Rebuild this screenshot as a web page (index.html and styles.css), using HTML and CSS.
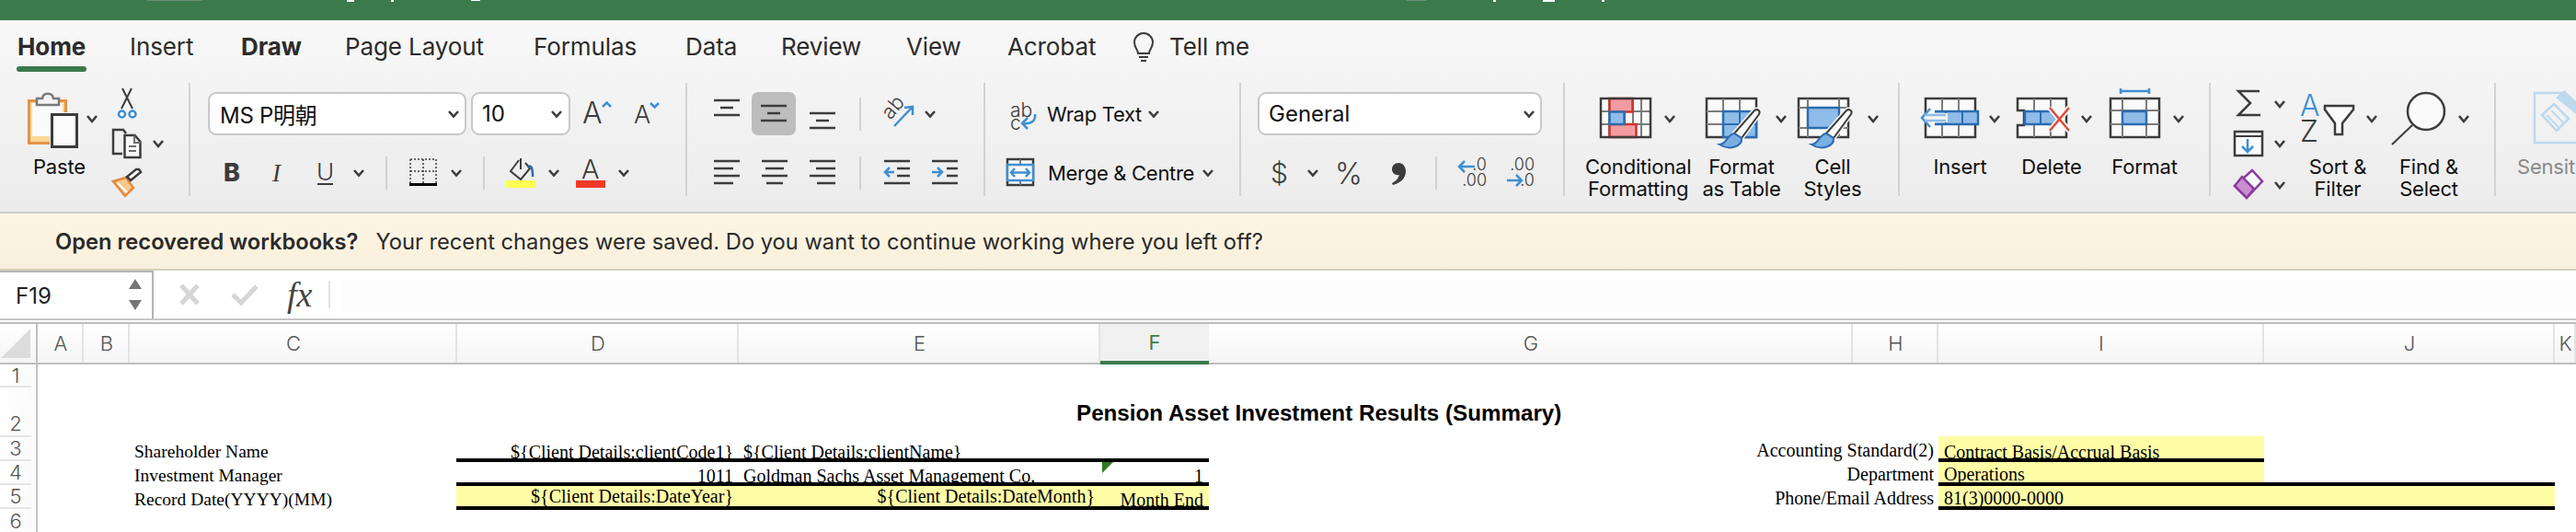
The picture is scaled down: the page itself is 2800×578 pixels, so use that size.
FILE: index.html
```html
<!DOCTYPE html>
<html lang="en">
<head>
<meta charset="utf-8">
<title>Excel</title>
<link rel="stylesheet" href="styles.css">
</head>
<body>
<div class="titlebar">
  <svg width="2800" height="22" viewBox="0 0 2800 22"><rect class="sp-d" x="160" y="0" width="60" height="1"/><rect class="sp-w" x="377" y="0" width="8" height="2"/><rect class="sp-w" x="425" y="0" width="3" height="2"/><rect class="sp-w" x="512" y="0" width="10" height="1"/><rect class="sp-d" x="1529" y="0" width="22" height="1"/><rect class="sp-w" x="1623" y="0" width="3" height="2"/><rect class="sp-w" x="1677" y="0" width="13" height="2"/><rect class="sp-w" x="1741" y="0" width="3" height="2"/></svg>
</div>

<nav class="tabs">
  <a class="tab tab-home">Home</a>
  <a class="tab tab-insert">Insert</a>
  <a class="tab tab-draw">Draw</a>
  <a class="tab tab-layout">Page Layout</a>
  <a class="tab tab-formulas">Formulas</a>
  <a class="tab tab-data">Data</a>
  <a class="tab tab-review">Review</a>
  <a class="tab tab-view">View</a>
  <a class="tab tab-acrobat">Acrobat</a>
  <svg class="bulb" width="26" height="34" viewBox="1228 34 26 34"><path class="s2" d="M1235 58c0-4-4-6-4-12a10 10 0 0 1 20 0c0 6-4 8-4 12z"/><path class="s2" d="M1236 62h10M1238 66h6"/></svg>
  <a class="tab tab-tell">Tell me</a>
</nav>

<section class="ribbon">
  <!-- Clipboard -->
  <div class="group g-clip">
    <div class="big big-paste">
      <svg width="88" height="79" viewBox="20 90 88 79">
        <rect x="31.5" y="109.5" width="40" height="46" fill="#fbd994" stroke="#e39246" stroke-width="3"/>
        <rect x="35" y="112" width="33" height="36" fill="#fafafa"/>
        <path d="M40 114v-7h6c1-7 11-7 12 0h6v7z" fill="#f4f4f4" stroke="#7a7a7a" stroke-width="2.5"/>
        <rect x="54" y="122" width="33" height="40" fill="#f2f2f2"/>
        <rect x="56.500" y="124.500" width="27" height="35" fill="#fbfbfb" stroke="#3c3c3c" stroke-width="3"/>
        <polyline class="cv" points="95,126 100,132 105,126"/>
      </svg>
      <span class="blabel">Paste</span>
    </div>
    <div class="clip-col">
      <svg width="64" height="42" viewBox="120 92 64 42">
        <path class="s2" d="M133 96l11 22M143 96l-11 22"/>
        <circle cx="132.500" cy="124" r="3.500" fill="#fff" stroke="#3f8fd2" stroke-width="2.500"/>
        <circle cx="144" cy="124" r="3.500" fill="#fff" stroke="#3f8fd2" stroke-width="2.500"/>
      </svg>
      <svg width="64" height="42" viewBox="120 134 64 42">
        <path class="s25" d="M133 167h-10v-26h11l3 4"/>
        <path d="M135.500 147h11l6 7v17h-17z" fill="#f8f8f8" stroke="#3c3c3c" stroke-width="2.500"/>
        <path d="M146 147v8h7M140 159h8M140 164h8" fill="none" stroke="#6e6e6e" stroke-width="2"/>
        <polyline class="cv" points="167,153 172,159 177,153"/>
      </svg>
      <svg width="64" height="38" viewBox="120 180 64 38">
        <path d="M123 197l14-4 8 11-9 9z" fill="#f8c98a" stroke="#e2873e" stroke-width="2.500"/>
        <path d="M128 199l10 10" stroke="#fff" stroke-width="2"/>
        <path d="M138 192l4 4 11-9-2-3-3 0z" fill="#fff" stroke="#3c3c3c" stroke-width="2.500"/>
      </svg>
    </div>
  </div>

  <!-- Font -->
  <div class="group g-font">
    <div class="row1 cols-font1">
      <div class="select sel-font"><span>MS P明朝</span><svg class="chev" viewBox="0 0 12 8"><polyline points="1,1 6,6.5 11,1"/></svg></div>
      <div class="select sel-size"><span>10</span><svg class="chev" viewBox="0 0 12 8"><polyline points="1,1 6,6.5 11,1"/></svg></div>
      <svg width="90" height="47" viewBox="630 100 90 47">
        <text class="glyph" x="633" y="134" font-size="32">A</text>
        <polyline class="bl" points="655,116 659.500,111.500 664,116"/>
        <text class="glyph" x="689" y="134" font-size="27">A</text>
        <polyline class="bl" points="707,112 711.500,116.500 716,112"/>
      </svg>
    </div>
    <div class="row2 cols-font2">
      <svg width="20" height="36" viewBox="244 170 20 36"><text class="ui-b" x="243" y="197" font-size="27">B</text></svg>
      <svg width="20" height="36" viewBox="295 170 20 36"><text class="ui-i" x="296" y="197" font-size="27">I</text></svg>
      <svg width="20" height="36" viewBox="345 170 20 36"><text class="glyph" x="344" y="196" font-size="26">U</text><path class="s2" d="M345 200h17"/></svg>
      <svg class="chev" viewBox="0 0 12 8"><polyline points="1,1 6,6.5 11,1"/></svg>
      <i class="vsep"></i>
      <svg width="34" height="36" viewBox="443 170 34 36">
        <path d="M445 173h28v27M445 173v27M459 173v27M445 186h28" fill="none" stroke="#3c3c3c" stroke-width="1.500" stroke-dasharray="2 2"/>
        <path d="M444 200.500h30" stroke="#000" stroke-width="3"/>
      </svg>
      <svg class="chev" viewBox="0 0 12 8"><polyline points="1,1 6,6.5 11,1"/></svg>
      <i class="vsep"></i>
      <svg width="34" height="36" viewBox="550 170 34 36">
        <path d="M564 174l-9 12 11 9 10-12-5-6M566 172v12" fill="none" stroke="#3c3c3c" stroke-width="2"/>
        <path d="M574 181c4-2 5 2 5 11" fill="none" stroke="#2b6cb0" stroke-width="2.500"/>
        <rect x="550" y="196" width="32" height="8" fill="#fffd54"/>
      </svg>
      <svg class="chev" viewBox="0 0 12 8"><polyline points="1,1 6,6.500 11,1"/></svg>
      <svg width="34" height="36" viewBox="626 170 34 36">
        <text class="glyph" x="632" y="194" font-size="29">A</text>
        <rect x="626" y="196" width="32" height="8" fill="#f03a26"/>
      </svg>
      <svg class="chev" viewBox="0 0 12 8"><polyline points="1,1 6,6.500 11,1"/></svg>
    </div>
  </div>

  <!-- Alignment -->
  <div class="group g-align">
    <div class="row1 cols-al1">
      <svg width="30" height="47" viewBox="775 100 30 47"><path class="s25" d="M776 109h28M783 117h14M776 125h28"/></svg>
      <div class="pressed"><svg width="48" height="47" viewBox="818 100 48 47"><path class="s25" d="M828 115h28M835 123h14M828 131h28"/></svg></div>
      <svg width="30" height="47" viewBox="879 100 30 47"><path class="s25" d="M880 123h28M887 131h14M880 139h28"/></svg>
      <i class="vsep"></i>
      <svg width="40" height="47" viewBox="957 100 40 47">
        <text class="glyph" x="0" y="0" font-size="22" transform="translate(967 131) rotate(-50)">ab</text>
        <path class="bs" d="M971 137l20-21M982 117l9-1 0 9"/>
      </svg>
      <svg class="chev" viewBox="0 0 12 8"><polyline points="1,1 6,6.500 11,1"/></svg>
    </div>
    <div class="row2 cols-al2">
      <svg width="30" height="36" viewBox="775 170 30 36"><path class="s25" d="M776 175h28M776 183h21M776 191h28M776 199h21"/></svg>
      <svg width="30" height="36" viewBox="827 170 30 36"><path class="s25" d="M828 175h28M832 183h20M828 191h28M833 199h18"/></svg>
      <svg width="30" height="36" viewBox="879 170 30 36"><path class="s25" d="M880 175h28M887 183h21M880 191h28M888 199h20"/></svg>
      <i class="vsep"></i>
      <svg width="30" height="36" viewBox="961 170 30 36"><path class="s25" d="M962 175h28M976 183h14M976 191h14M962 199h28"/><path class="bs" d="M973 187h-10M968 182l-5 5 5 5"/></svg>
      <svg width="30" height="36" viewBox="1013 170 30 36"><path class="s25" d="M1014 175h28M1030 183h12M1030 191h12M1014 199h28"/><path class="bs" d="M1014 187h11M1020 182l5 5-5 5"/></svg>
    </div>
  </div>

  <!-- Wrap / merge -->
  <div class="group g-wrap">
    <div class="row1 cols-wr1">
      <svg width="34" height="47" viewBox="1096 100 34 47">
        <text class="glyph" x="1098" y="127" font-size="21">ab</text>
        <text class="glyph" x="1098" y="141" font-size="21">c</text>
        <path class="bs" d="M1125 124c1 8-5 11-13 10M1117 128l-6 6 6 6"/>
      </svg>
      <span class="rtext">Wrap Text</span>
      <svg class="chev" viewBox="0 0 12 8"><polyline points="1,1 6,6.500 11,1"/></svg>
    </div>
    <div class="row2 cols-wr2">
      <svg width="32" height="36" viewBox="1093 170 32 36">
        <rect x="1095" y="173" width="28" height="28" fill="#fafafa" stroke="#3c3c3c" stroke-width="2.500"/>
        <path d="M1109 173v28" stroke="#7a7a7a" stroke-width="2"/>
        <rect x="1095" y="179" width="28" height="17" fill="#f8f8f8" stroke="#3f8fd2" stroke-width="2.500"/>
        <path class="bs" d="M1099 187.500h20M1103 183l-4 4.500 4 4.500M1115 183l4 4.500-4 4.500"/>
      </svg>
      <span class="rtext">Merge &amp; Centre</span>
      <svg class="chev" viewBox="0 0 12 8"><polyline points="1,1 6,6.500 11,1"/></svg>
    </div>
  </div>

  <!-- Number -->
  <div class="group g-num">
    <div class="row1 cols-num1">
      <div class="select sel-gen"><span>General</span><svg class="chev" viewBox="0 0 12 8"><polyline points="1,1 6,6.500 11,1"/></svg></div>
    </div>
    <div class="row2 cols-num2">
      <svg width="20" height="36" viewBox="1381 170 20 36"><text class="glyph" x="1381" y="199" font-size="30">$</text></svg>
      <svg class="chev" viewBox="0 0 12 8"><polyline points="1,1 6,6.500 11,1"/></svg>
      <svg width="34" height="36" viewBox="1450 170 34 36"><text class="glyph" x="1451" y="200" font-size="32">%</text></svg>
      <svg width="22" height="36" viewBox="1510 170 22 36"><path d="M1520 177c5 0 8 4 8 9 0 8-6 13-14 15l-1-2c4-2 7-5 8-9-4 1-8-2-8-6 0-4 3-7 7-7z" fill="#3c3c3c"/></svg>
      <i class="vsep"></i>
      <svg width="36" height="36" viewBox="1583 170 36 36">
        <text class="tiny" x="1616" y="185" font-size="18" text-anchor="end">.0</text>
        <text class="tiny" x="1616" y="202" font-size="18" text-anchor="end">.00</text>
        <path class="bs" d="M1603 181h-17M1592 175l-6 6 6 6"/>
      </svg>
      <svg width="36" height="36" viewBox="1636 170 36 36">
        <text class="tiny" x="1668" y="185" font-size="18" text-anchor="end">.00</text>
        <text class="tiny" x="1668" y="202" font-size="18" text-anchor="end">.0</text>
        <path class="bs" d="M1638 196h16M1648 190l6 6-6 6"/>
      </svg>
    </div>
  </div>

  <!-- Styles -->
  <div class="group g-styles">
    <div class="bigs cols-styles">
      <div class="big">
        <svg width="115" height="79" viewBox="1723 90 115 79">
          <rect x="1740" y="107" width="54" height="42" fill="#fafafa"/>
          <path d="M1740 121h54M1740 135h54M1749 107v42M1766 107v42M1775 107v42M1784 107v42" class="grid"/>
          <rect x="1749.500" y="107" width="25" height="14.500" fill="#f29ca2" stroke="#c9352b" stroke-width="2.500"/>
          <rect x="1749.500" y="135" width="29" height="14" fill="#f29ca2" stroke="#c9352b" stroke-width="2.500"/>
          <rect x="1749.500" y="121.500" width="16" height="13.500" fill="#8fbce8" stroke="#2b6cb0" stroke-width="2.500"/>
          <rect x="1740" y="107" width="54" height="42" fill="none" stroke="#3c3c3c" stroke-width="2.500"/>
          <polyline class="cv" points="1810,126 1815,132 1820,126"/>
        </svg>
        <span class="blabel">Conditional<br>Formatting</span>
      </div>
      <div class="big">
        <svg width="100" height="79" viewBox="1843 90 100 79">
          <rect x="1855" y="107" width="54" height="42" fill="#fafafa" stroke="#3c3c3c" stroke-width="2.500"/>
          <path d="M1873 107v42M1891 107v42M1855 121h54M1855 135h54" class="grid"/>
          <rect x="1873" y="121" width="36" height="28" fill="#8fbce8" stroke="#2b6cb0" stroke-width="2.500"/>
          <path d="M1891 121v28M1873 135h36" stroke="#2b6cb0" stroke-width="2"/>
          <path d="M1907 120c3-2 7 0 5 4l-19 26-8-5z" fill="#fafafa" stroke="#f2f2f2" stroke-width="5"/>
          <path d="M1907 120c3-2 7 0 5 4l-19 26-8-5z" fill="#fafafa" stroke="#3c3c3c" stroke-width="2"/>
          <path d="M1869 157c8 0 8-11 16-12l8 5c1 9-13 14-24 7z" fill="#79aee3" stroke="#2b6cb0" stroke-width="2"/>
          <polyline class="cv" points="1931,126 1936,132 1941,126"/>
        </svg>
        <span class="blabel">Format<br>as Table</span>
      </div>
      <div class="big">
        <svg width="100" height="79" viewBox="1942 90 100 79">
          <rect x="1955" y="107" width="54" height="42" fill="#fafafa" stroke="#3c3c3c" stroke-width="2.500"/>
          <path d="M1965 107v42M1999 107v42M1955 117h54M1955 139h54" class="grid"/>
          <rect x="1965" y="117" width="34" height="22" fill="#8fbce8" stroke="#2b6cb0" stroke-width="2.500"/>
          <path d="M2007 120c3-2 7 0 5 4l-19 26-8-5z" fill="#fafafa" stroke="#f2f2f2" stroke-width="5"/>
          <path d="M2007 120c3-2 7 0 5 4l-19 26-8-5z" fill="#fafafa" stroke="#3c3c3c" stroke-width="2"/>
          <path d="M1969 157c8 0 8-11 16-12l8 5c1 9-13 14-24 7z" fill="#79aee3" stroke="#2b6cb0" stroke-width="2"/>
          <polyline class="cv" points="2031,126 2036,132 2041,126"/>
        </svg>
        <span class="blabel">Cell<br>Styles</span>
      </div>
    </div>
  </div>

  <!-- Cells -->
  <div class="group g-cells">
    <div class="bigs cols-cells">
      <div class="big">
        <svg width="89" height="79" viewBox="2086 90 89 79">
          <rect x="2093" y="107" width="54" height="42" fill="#fafafa" stroke="#3c3c3c" stroke-width="2.500"/>
          <path d="M2111 107v42M2129 107v42" class="grid"/>
          <rect x="2100" y="121" width="50" height="14" fill="#8fbce8" stroke="#2b6cb0" stroke-width="2.500"/>
          <path d="M2115 121v14M2133 121v14" stroke="#2b6cb0" stroke-width="2"/>
          <path d="M2103 114l-14 14 14 14v-9h14v-10h-14z" fill="#f5f5f5"/>
          <path class="bs" d="M2098 118l-9 10 9 10"/>
          <path d="M2092 125h23M2092 131h23" stroke="#8fbce8" stroke-width="2.500"/>
          <polyline class="cv" points="2163,126 2168,132 2173,126"/>
        </svg>
        <span class="blabel">Insert</span>
      </div>
      <div class="big">
        <svg width="88" height="79" viewBox="2186 90 88 79">
          <path d="M2193 120v-13h53v42h-53v-13h7v-16z" fill="#fafafa" stroke="#3c3c3c" stroke-width="2.500"/>
          <path d="M2211 107v42M2229 107v42" class="grid"/>
          <path d="M2201 121h30l8 7-8 7h-30z" fill="#8fbce8" stroke="#2b6cb0" stroke-width="2.500"/>
          <path d="M2218 121v14" stroke="#2b6cb0" stroke-width="2"/>
          <path d="M2228 117l21 25M2249 117l-21 25" stroke="#f5f5f5" stroke-width="6"/>
          <path d="M2228 117l21 25M2249 117l-21 25" stroke="#e0493c" stroke-width="2.500"/>
          <polyline class="cv" points="2263,126 2268,132 2273,126"/>
        </svg>
        <span class="blabel">Delete</span>
      </div>
      <div class="big">
        <svg width="86" height="79" viewBox="2288 90 86 79">
          <rect x="2294" y="107" width="53" height="42" fill="#fafafa" stroke="#3c3c3c" stroke-width="2.500"/>
          <path d="M2307 107v42M2333 107v42M2294 120h53M2294 135h53" class="grid"/>
          <rect x="2307" y="121" width="26" height="14" fill="#8fbce8" stroke="#2b6cb0" stroke-width="2.500"/>
          <path class="bs" d="M2305 99h31M2305 96v6M2336 96v6"/>
          <polyline class="cv" points="2363,126 2368,132 2373,126"/>
        </svg>
        <span class="blabel">Format</span>
      </div>
    </div>
  </div>

  <!-- Editing -->
  <div class="group g-edit">
    <div class="bigs cols-edit">
      <div class="edit-col">
        <svg width="64" height="42" viewBox="2426 92 64 42">
          <path class="s25" d="M2456 99h-23l13 13-13 13h24"/>
          <polyline class="cv" points="2473,110 2478,116 2483,110"/>
        </svg>
        <svg width="64" height="42" viewBox="2426 134 64 42">
          <rect x="2429" y="143" width="30" height="26" fill="#fafafa" stroke="#3c3c3c" stroke-width="2.500"/>
          <path class="s2" d="M2429 148h30"/>
          <path class="bs" d="M2443 151v14M2437 159l6 6 6-6"/>
          <polyline class="cv" points="2473,153 2478,159 2483,153"/>
        </svg>
        <svg width="64" height="42" viewBox="2426 176 64 42">
          <path d="M2429 202l19-17 11 12-17 18z" fill="#fafafa" stroke="#8a3a9e" stroke-width="2.500"/>
          <path d="M2429 202l8-10 13 13-8 10z" fill="#c78fd0" stroke="#8a3a9e" stroke-width="2.500"/>
          <polyline class="cv" points="2473,198 2478,204 2483,198"/>
        </svg>
      </div>
      <div class="big">
        <svg width="86" height="79" viewBox="2498 90 86 79">
          <text class="glyph blue" x="2500" y="126" font-size="32">A</text>
          <text class="glyph" x="2500" y="154" font-size="32">Z</text>
          <path d="M2527 115h31v4l-12 15v12h-8v-12l-11-15z" fill="#fafafa" stroke="#3c3c3c" stroke-width="2.500"/>
          <polyline class="cv" points="2573,126 2578,132 2583,126"/>
        </svg>
        <span class="blabel">Sort &amp;<br>Filter</span>
      </div>
      <div class="big">
        <svg width="88" height="79" viewBox="2596 90 88 79">
          <circle cx="2637" cy="121" r="20" fill="#fafafa" stroke="#3c3c3c" stroke-width="2.500"/>
          <path class="s2" d="M2622 136l-22 21"/>
          <polyline class="cv" points="2673,126 2678,132 2683,126"/>
        </svg>
        <span class="blabel">Find &amp;<br>Select</span>
      </div>
    </div>
  </div>

  <!-- Sensitivity -->
  <div class="group g-sens">
    <div class="big big-sens">
      <svg width="87" height="79" viewBox="2713 90 87 79">
        <path d="M2786 101h-31v54h45" fill="none" stroke="#bcd9ee" stroke-width="2.500"/>
        <path d="M2763 125l13-12 16 16-13 13z" fill="none" stroke="#bcd9ee" stroke-width="2.500"/>
        <path d="M2768 125l13 13M2773 120l13 13" stroke="#bcd9ee" stroke-width="2"/>
        <path d="M2778 106l9-8 13 12v14z" fill="#bcd9ee"/>
      </svg>
      <span class="blabel sens">Sensitivity</span>
    </div>
  </div>
</section>

<div class="banner">
  <strong>Open recovered workbooks?</strong>
  <span>Your recent changes were saved. Do you want to continue working where you left off?</span>
</div>

<div class="formula">
  <div class="namebox">
    <span>F19</span>
    <svg width="16" height="36" viewBox="0 0 16 36"><path d="M8 0l7 11H1zM1 23h14l-7 11z" fill="#757575"/></svg>
  </div>
  <div class="fx-tools">
    <svg width="24" height="24" viewBox="0 0 24 24"><path d="M3 2l18 20M21 2L3 22" stroke="#d6d6d6" stroke-width="5"/></svg>
    <svg width="30" height="24" viewBox="0 0 30 24"><path d="M2 12l9 9L28 3" fill="none" stroke="#d6d6d6" stroke-width="5"/></svg>
    <span class="fx">fx</span>
    <i class="fx-sep"></i>
  </div>
  <div class="fx-input"></div>
</div>

<div class="colheads">
  <div class="ch corner"><svg width="32" height="32" viewBox="0 0 32 32"><path d="M32 0v32H0z" fill="#dcdcdc"/></svg></div>
  <div class="ch">A</div><div class="ch">B</div><div class="ch">C</div><div class="ch">D</div><div class="ch">E</div>
  <div class="ch ch-on">F</div>
  <div class="ch">G</div><div class="ch">H</div><div class="ch">I</div><div class="ch">J</div><div class="ch">K</div>
</div>

<div class="sheet">
  <div class="rowheads">
    <div class="rh rh1">1</div>
    <div class="rh rh2">2</div>
    <div class="rh rh3">3</div>
    <div class="rh rh3">4</div>
    <div class="rh rh3">5</div>
    <div class="rh rh6">6</div>
  </div>
  <div class="cells">
    <div class="c title">Pension Asset Investment Results (Summary)</div>

    <div class="c r3 col-c lab">Shareholder Name</div>
    <div class="c r3 col-d rule num pb1">${Client Details:clientCode1}</div>
    <div class="c r3 col-e rule pb1 txt">${Client Details:clientName}</div>
    <div class="c r3 col-f rule"></div>
    <div class="c r3 col-h right pb3">Accounting Standard(2)</div>
    <div class="c r3 col-i yel rule txt2 pb1">Contract Basis/Accrual Basis</div>

    <div class="c r4 col-c lab pb1">Investment Manager</div>
    <div class="c r4 col-d rule num pb1">1011</div>
    <div class="c r4 col-e rule pb1 txt">Goldman Sachs Asset Management Co.</div>
    <div class="c r4 col-f rule num pb1 flag">1</div>
    <div class="c r4 col-h right pb3">Department</div>
    <div class="c r4 col-i yel rule txt2 pb3">Operations</div>
    <div class="c r4 col-j rule"></div>

    <div class="c r5 col-c lab pb1">Record Date(YYYY)(MM)</div>
    <div class="c r5 col-d yel rule num pb5">${Client Details:DateYear}</div>
    <div class="c r5 col-e yel rule num pb5">${Client Details:DateMonth}</div>
    <div class="c r5 col-f yel rule num pb1">Month End</div>
    <div class="c r5 col-h right pb3">Phone/Email Address</div>
    <div class="c r5 col-ij yel rule txt2 pb3">81(3)0000-0000</div>
  </div>
</div>
</body>
</html>
```

FILE: styles.css
```css
* { box-sizing: border-box; }
html, body { margin: 0; padding: 0; }
body {
  width: 2800px;
  height: 578px;
  overflow: hidden;
  background: #fff;
  font-family: Inter, "Noto Sans", "Noto Sans CJK JP", sans-serif;
  color: #222;
}
svg { display: block; flex: none; overflow: visible; }
.big-sens svg { overflow: hidden; }
i { display: block; }

/* title bar */
.titlebar { height: 22px; background: #3b7a4b; }
.sp-w { fill: #fff; }
.sp-d { fill: #6c8f74; }

/* tabs */
.tabs {
  height: 68px;
  display: flex;
  align-items: flex-start;
  padding-left: 19px;
  background: linear-gradient(#f8f8f8, #f4f4f4);
}
.tab { font-size: 26px; line-height: 58px; color: #2b2b2b; white-space: nowrap; letter-spacing: -0.1px; position: relative; }
.tab-home { font-weight: 700; width: 122px; }
.tab-home::after { content: ""; position: absolute; left: -1px; top: 50px; width: 76px; height: 6px; border-radius: 3px; background: #3b7a4b; }
.tab-insert { width: 121px; }
.tab-draw { width: 113px; font-weight: 700; }
.tab-layout { width: 205px; }
.tab-formulas { width: 165px; }
.tab-data { width: 104px; }
.tab-review { width: 136px; }
.tab-view { width: 110px; }
.tab-acrobat { width: 135px; }
.bulb { margin-top: 12px; }
.tab-tell { margin-left: 15px; }
.s2, .s25 { fill: none; stroke: #3c3c3c; stroke-width: 2; }
.s25 { stroke-width: 2.5; }

/* ribbon */
.ribbon {
  height: 142px;
  display: flex;
  align-items: flex-start;
  background: linear-gradient(#f4f4f4, #ececec);
  border-bottom: 2px solid #cccccc;
}
.group { height: 123px; flex: none; border-right: 2px solid #d2d2d2; }
.g-clip { width: 207px; display: flex; padding-left: 20px; }
.g-font { width: 540px; }
.g-align { width: 324px; }
.g-wrap { width: 278px; }
.g-num { width: 352px; }
.g-styles { width: 364px; padding-left: 22px; }
.g-cells { width: 338px; padding-left: 21px; }
.g-edit { width: 310px; padding-left: 23px; }
.g-sens { width: 87px; border-right: 0; }

.big { display: flex; flex-direction: column; align-items: center; flex: none; }
.blabel { font-size: 22px; line-height: 24px; text-align: center; white-space: nowrap; color: #111; letter-spacing: -0.2px; }
.big-paste { width: 88px; align-items: flex-start; }
.big-paste .blabel { margin-left: 16px; }
.clip-col { margin-left: 12px; padding-top: 2px; }
.clip-col svg + svg + svg { margin-top: 4px; }
.big-sens { align-items: flex-start; width: 87px; }
.sens { color: #8a8a8a; margin-left: 23px; }

.row1, .row2 { display: grid; align-items: center; }
.row1 { height: 47px; margin-top: 10px; }
.row2 { height: 36px; margin-top: 23px; }
.cols-font1 { grid-template-columns: 286px 118px auto; padding-left: 19px; }
.cols-font2 { grid-template-columns: 51px 50px 39px 35px 25px 46px 35px 25px 46px 30px 46px auto; padding-left: 37px; }
.cols-al1 { grid-template-columns: 42px 62px 55px 24px 47px auto; padding-left: 28px; }
.cols-al2 { grid-template-columns: 52px 52px 55px 26px 52px auto; padding-left: 28px; }
.cols-wr1 { grid-template-columns: 42px 110px auto; padding-left: 25px; }
.cols-wr2 { grid-template-columns: 46px 168px auto; padding-left: 22px; }
.cols-num1 { grid-template-columns: auto; padding-left: 18px; }
.cols-num2 { grid-template-columns: 40px 29px 60px 50px 23px 53px auto; padding-left: 32px; }
.bigs { display: grid; align-items: start; justify-items: start; }
.cols-styles { grid-template-columns: 120px 99px auto; }
.cols-cells { grid-template-columns: 100px 102px auto; }
.cols-edit { grid-template-columns: 72px 98px auto; }
.edit-col { padding-top: 2px; }

.chev { width: 12px; height: 8px; fill: none; stroke: #3c3c3c; stroke-width: 2.6; }
.cv { fill: none; stroke: #3c3c3c; stroke-width: 2.6; }
.vsep { width: 2px; height: 36px; background: #d2d2d2; }
.bl, .bs { fill: none; stroke: #3f8fd2; stroke-width: 2.5; }
.grid { fill: none; stroke: #7c7c7c; stroke-width: 2; }

.glyph { font-family: Inter, sans-serif; font-weight: 300; fill: #3c3c3c; }
.glyph.blue { fill: #3f8fd2; }
.ui-b { font-family: Inter, sans-serif; font-weight: 800; fill: #3c3c3c; }
.ui-i { font-family: "Liberation Serif", serif; font-style: italic; fill: #3c3c3c; }
.tiny { font-family: Inter, sans-serif; font-weight: 300; fill: #3c3c3c; }

.select {
  height: 47px;
  background: #fff;
  border: 2px solid #c8c8c8;
  border-radius: 9px;
  display: flex;
  align-items: center;
  justify-content: space-between;
  font-size: 24px;
  color: #111;
}
.sel-font { width: 281px; padding: 0 6px 0 11px; letter-spacing: -0.3px; }
.sel-size { width: 108px; padding: 0 7px 0 10px; }
.sel-gen { width: 309px; padding: 0 6px 0 10px; }
.pressed { width: 48px; height: 47px; background: #bdbdbd; border-radius: 7px; }
.rtext { font-size: 22px; line-height: 30px; color: #111; white-space: nowrap; letter-spacing: -0.3px; }

/* banner */
.banner {
  height: 62px;
  padding: 0 0 0 60px;
  display: flex;
  align-items: center;
  gap: 19px;
  background: linear-gradient(#fef6e4, #f8f0dc);
  border-bottom: 2px solid #d6cfbd;
  font-size: 23.7px;
  color: #2a2a2a;
  white-space: nowrap;
}
.banner strong { font-weight: 600; }

/* formula bar */
.formula { height: 58px; display: flex; background: #fff; border-bottom: 2px solid #bcbcbc; position: relative; }
.namebox {
  width: 167px;
  height: 52px;
  display: flex;
  align-items: center;
  justify-content: space-between;
  padding: 0 10px 0 17px;
  border-top: 2px solid #b4b4b4;
  border-right: 2px solid #b4b4b4;
  font-size: 24px;
  color: #222;
}
.fx-tools { width: 205px; height: 52px; display: flex; align-items: center; padding-left: 27px; }
.fx-tools svg + svg { margin-left: 33px; }
.fx { font-family: "Liberation Serif", serif; font-style: italic; font-size: 38px; line-height: 46px; color: #444; margin-left: 31px; width: 45px; }
.fx-sep { width: 2px; height: 30px; background: #e2e2e2; }
.fx-input { flex: 1; height: 36px; margin-top: 10px; background: #fdfdfd; }
.formula::after { content: ""; position: absolute; left: 0; right: 0; top: 52px; height: 2px; background: #c6c6c6; }

/* column headers */
.colheads {
  height: 44px;
  display: grid;
  grid-template-columns: 41px 50px 50px 356px 306px 393px 118px 700px 93px 354px 316px 23px;
  background: linear-gradient(#fff, #f5f5f5);
  border-bottom: 2px solid #bebebe;
}
.ch {
  display: flex;
  align-items: center;
  justify-content: center;
  border-right: 2px solid #e3e3e3;
  padding-left: 2px;
  font-size: 22px;
  font-weight: 300;
  color: #555;
  height: 42px;
}
.corner { border-right: 2px solid #bebebe; padding: 0 5px 0 0; }
.ch-on { background: #f0f0f0; color: #3b7a4b; border-right: 0; font-weight: 400; height: 44px; border-bottom: 4px solid #3b7a4b; padding-left: 0; }

/* sheet */
.sheet { display: flex; height: 182px; }
.rowheads { width: 41px; flex: none; border-right: 2px solid #c2c2c2; background: linear-gradient(90deg, #fff, #fafafa); }
.rh {
  width: 34px;
  text-align: center;
  font-size: 22px;
  font-weight: 300;
  color: #555;
  border-bottom: 2px solid #e5e5e5;
  display: flex;
  align-items: center;
  justify-content: center;
}
.rh1 { height: 25px; }
.rh2 { height: 54px; align-items: flex-end; }
.rh3 { height: 26px; }
.rh6 { height: 25px; border-bottom: 0; }

.cells {
  flex: 1;
  display: grid;
  grid-template-columns: 50px 50px 355px 307px 393px 118px 700px 93px 354px 316px;
  grid-template-rows: 25px 53px 28px 26px 26px;
  font-family: "Liberation Serif", serif;
  font-size: 20px;
  line-height: 22px;
  color: #000;
}
.c { display: flex; align-items: flex-end; white-space: nowrap; padding-bottom: 2px; min-width: 0; }
.title {
  grid-row: 2;
  grid-column: 5 / 8;
  margin-left: 367px;
  padding-bottom: 11px;
  line-height: 28px;
  font-family: "Liberation Sans", sans-serif;
  font-weight: 700;
  font-size: 24.2px;
}
.r3 { grid-row: 3; }
.r4 { grid-row: 4; }
.r5 { grid-row: 5; }
.col-c { grid-column: 3; padding-left: 5px; }
.lab { font-size: 19.5px; padding-bottom: 0; }
.col-d { grid-column: 4; }
.col-e { grid-column: 5; }
.col-f { grid-column: 6; }
.col-h { grid-column: 8; justify-self: end; padding-right: 5px; }
.col-i { grid-column: 9; }
.col-j { grid-column: 10; }
.col-ij { grid-column: 9 / 11; }
.right { justify-content: flex-end; }
.num { justify-content: flex-end; padding-right: 6px; }
.txt { padding-left: 5px; }
.txt2 { padding-left: 6px; }
.pb1 { padding-bottom: 0; }
.pb3 { padding-bottom: 2px; }
.pb5 { padding-bottom: 4px; }
.rule { background: linear-gradient(#000, #000) left bottom / 100% 4px no-repeat; }
.yel { background: linear-gradient(#000, #000) left bottom / 100% 4px no-repeat, #fffda6; }
.flag { position: relative; }
.flag::before { content: ""; position: absolute; left: 2px; top: 0; width: 12px; height: 12px; background: #2f7a1f; clip-path: polygon(0 0, 100% 0, 0 100%); }
```
